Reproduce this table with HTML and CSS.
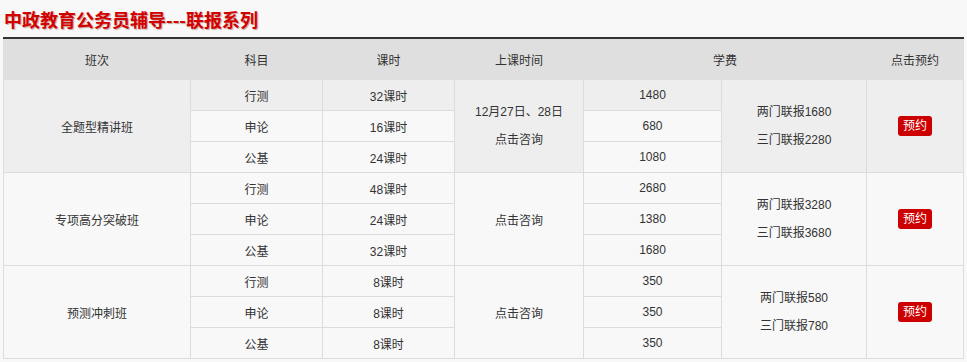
FILE: index.html
```html
<!DOCTYPE html>
<html lang="zh-CN">
<head>
<meta charset="utf-8">
<title>中政教育公务员辅导---联报系列</title>
<link rel="stylesheet" href="styles.css">
</head>
<body>
<div class="page">
  <h1 class="title">中政教育公务员辅导---联报系列</h1>
  <table class="plan">
    <colgroup>
      <col class="c1"><col class="c2"><col class="c3"><col class="c4"><col class="c5"><col class="c6"><col class="c7">
    </colgroup>
    <thead>
      <tr>
        <th>班次</th><th>科目</th><th>课时</th><th>上课时间</th><th colspan="2">学费</th><th>点击预约</th>
      </tr>
    </thead>
    <tbody>
      <tr class="hl">
        <td rowspan="3">全题型精讲班</td><td>行测</td><td>32课时</td>
        <td rowspan="3"><div class="two">12月27日、28日<br>点击咨询</div></td>
        <td>1480</td>
        <td rowspan="3"><div class="two">两门联报1680<br>三门联报2280</div></td>
        <td rowspan="3"><span class="btn">预约</span></td>
      </tr>
      <tr><td>申论</td><td>16课时</td><td>680</td></tr>
      <tr><td>公基</td><td>24课时</td><td>1080</td></tr>

      <tr>
        <td rowspan="3">专项高分突破班</td><td>行测</td><td>48课时</td>
        <td rowspan="3">点击咨询</td>
        <td>2680</td>
        <td rowspan="3"><div class="two">两门联报3280<br>三门联报3680</div></td>
        <td rowspan="3"><span class="btn">预约</span></td>
      </tr>
      <tr><td>申论</td><td>24课时</td><td>1380</td></tr>
      <tr><td>公基</td><td>32课时</td><td>1680</td></tr>

      <tr>
        <td rowspan="3">预测冲刺班</td><td>行测</td><td>8课时</td>
        <td rowspan="3">点击咨询</td>
        <td>350</td>
        <td rowspan="3"><div class="two">两门联报580<br>三门联报780</div></td>
        <td rowspan="3"><span class="btn">预约</span></td>
      </tr>
      <tr><td>申论</td><td>8课时</td><td>350</td></tr>
      <tr><td>公基</td><td>8课时</td><td>350</td></tr>
    </tbody>
  </table>
</div>
</body>
</html>
```
FILE: styles.css
```css
html, body {
  margin: 0;
  padding: 0;
  background: #f8f8f8;
}
body {
  font-family: "Liberation Sans", "Noto Sans CJK SC", sans-serif;
  font-size: 12px;
  color: #333;
}
.page {
  padding: 0 4px 0 3px;
}
.title {
  margin: 0;
  padding-top: 2px;
  height: 35px;
  line-height: 35px;
  font-size: 18px;
  font-weight: bold;
  color: #d40000;
  padding-left: 1px;
  text-shadow: 1px 1px 1px rgba(90, 0, 0, 0.35);
  font-family: "Noto Sans CJK SC", "Liberation Sans", sans-serif;
}
.plan {
  width: 960px;
  table-layout: fixed;
  border-collapse: collapse;
  border-top: 2px solid #333;
}
.c1 { width: 187px; }
.c2 { width: 132px; }
.c3 { width: 132px; }
.c4 { width: 129px; }
.c5 { width: 138px; }
.c6 { width: 145px; }
.c7 { width: 97px; }
.plan th {
  height: 40px;
  padding: 0;
  background: #dfdfdf;
  font-weight: normal;
  text-align: center;
  border: 1px solid #dfdfdf;
  border-top: 2px solid #333;
}
.plan td {
  height: 30px;
  padding: 0;
  text-align: center;
  vertical-align: middle;
  border: 1px solid #dcdcdc;
}
.plan tr.hl td {
  background: #eeeeee;
}
.two {
  line-height: 28px;
}
.btn {
  display: inline-block;
  width: 34px;
  height: 20px;
  line-height: 20px;
  background: #cc0000;
  color: #fff;
  border-radius: 3px;
  vertical-align: middle;
}
```
